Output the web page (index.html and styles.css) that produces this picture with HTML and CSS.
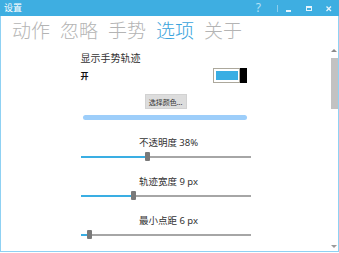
FILE: index.html
```html
<!DOCTYPE html>
<html>
<head>
  <title>设置</title>
  <meta charset="utf-8">
  <link rel="stylesheet" href="styles.css">
</head>
<body>
  <div class="window">
    <div class="titlebar">
      <span class="title">设置</span>
      <div class="controls">
        <span class="help">?</span>
        <span class="sep"></span>
        <svg class="ctl" width="6" height="12" viewBox="0 0 6 12"><rect x="0" y="10" width="5" height="2" fill="#e6f4fc"/></svg>
        <svg class="ctl" width="6" height="12" viewBox="0 0 6 12"><rect x="0.5" y="6.5" width="5" height="4" fill="none" stroke="#e6f4fc"/><rect x="0" y="6" width="6" height="2" fill="#e6f4fc"/></svg>
        <svg class="ctl" width="6" height="12" viewBox="0 0 6 12"><path d="M0.5 6.5 L5 11 M5 6.5 L0.5 11" stroke="#e6f4fc" stroke-width="1.3"/></svg>
      </div>
    </div>

    <div class="tabs">
      <span class="tab">动作</span>
      <span class="tab">忽略</span>
      <span class="tab">手势</span>
      <span class="tab active">选项</span>
      <span class="tab">关于</span>
    </div>

    <div class="panel">
      <div class="content">
        <div class="settings">
          <div class="label">显示手势轨迹</div>
          <div class="toggle-row">
            <span class="state">开</span>
            <div class="toggle">
              <div class="track"><div class="fill"></div></div>
              <div class="knob"></div>
            </div>
          </div>
          <div class="btn-row"><button class="btn">选择颜色...</button></div>
          <div class="color-bar"></div>

          <div class="slider-group">
            <div class="slider-label">不透明度 38%</div>
            <div class="slider">
              <div class="done" style="width: 64px"></div>
              <div class="thumb"></div>
              <div class="rest"></div>
            </div>
          </div>
          <div class="slider-group">
            <div class="slider-label">轨迹宽度 9 px</div>
            <div class="slider">
              <div class="done" style="width: 50px"></div>
              <div class="thumb"></div>
              <div class="rest"></div>
            </div>
          </div>
          <div class="slider-group">
            <div class="slider-label">最小点距 6 px</div>
            <div class="slider">
              <div class="done" style="width: 6px"></div>
              <div class="thumb"></div>
              <div class="rest"></div>
            </div>
          </div>
        </div>
      </div>
      <div class="scrollbar">
        <div class="arrow up"></div>
        <div class="sb-thumb"></div>
        <div class="sb-track"></div>
        <div class="arrow down"></div>
      </div>
    </div>
  </div>
</body>
</html>
```

FILE: styles.css
```css
body {
  margin: 0;
  background: #fff;
  font-family: "Noto Sans", "Noto Sans CJK SC", sans-serif;
  color: #333;
}

.window {
  width: 339px;
  height: 252px;
  box-sizing: border-box;
  border: 1px solid #8fd1f3;
  border-top: none;
}

.titlebar {
  height: 16px;
  margin: 0 -1px;
  background: #3eaee1;
  display: flex;
  align-items: center;
  color: #fff;
}

.title {
  font-size: 9px;
  line-height: 16px;
  padding-left: 4px;
}

.controls {
  margin-left: auto;
  display: flex;
  align-items: flex-start;
  height: 16px;
}

.help {
  font-size: 12px;
  line-height: 16px;
  color: #b5e1f6;
  margin-right: 16px;
}

.sep {
  width: 1px;
  height: 7px;
  margin-top: 5px;
  background: #8ccdec;
  margin-right: 8px;
}

.ctl {
  margin-right: 14px;
}

.ctl:last-child {
  margin-right: 7px;
}

.tabs {
  padding: 6px 0 0 11px;
  height: 24px;
  font-size: 19px;
  line-height: 19px;
  font-weight: 300;
  color: #b4b4b4;
}

.tab {
  margin-right: 5px;
}

.tab.active {
  color: #3ba4dc;
}

.panel {
  display: flex;
  height: 205px;
}

.content {
  flex: 1;
  overflow: hidden;
}

.settings {
  width: 170px;
  margin: 0 auto;
  padding-top: 6px;
}

.label {
  font-size: 10px;
  line-height: 12px;
}

.toggle-row {
  display: flex;
  align-items: center;
  justify-content: space-between;
  margin-top: 4px;
  padding-right: 4px;
}

.state {
  font-size: 8px;
  font-weight: bold;
  color: #111;
}

.toggle {
  display: flex;
  width: 34px;
  height: 15px;
}

.track {
  flex: 1;
  border: 1px solid #aca89c;
  padding: 2px 1px 2px 2px;
}

.fill {
  height: 100%;
  background: #3aaee3;
}

.knob {
  width: 7px;
  background: #000;
}

.btn-row {
  display: flex;
  justify-content: center;
  margin-top: 11px;
}

.btn {
  width: 42px;
  height: 15px;
  padding: 0;
  border: 1px solid #d2d2d2;
  background: #dddddd;
  font-family: inherit;
  font-size: 7px;
  color: #333;
}

.color-bar {
  height: 5px;
  margin: 6px 4px 0 2px;
  border-radius: 3px;
  background: #9dcefa;
}

.slider-group {
  margin-top: 17px;
}

.slider-group + .slider-group {
  margin-top: 15px;
}

.slider-label {
  font-size: 9.5px;
  line-height: 12px;
  text-align: center;
  padding-left: 6px;
}

.slider {
  display: flex;
  align-items: center;
  height: 9px;
  margin-top: 3px;
}

.done {
  height: 2px;
  background: #3aaee3;
}

.thumb {
  width: 5px;
  height: 9px;
  border-radius: 1px;
  background: #7a7a7a;
}

.rest {
  flex: 1;
  height: 2px;
  background: #a6a6a6;
}

.scrollbar {
  width: 8px;
  display: flex;
  flex-direction: column;
  align-items: center;
}

.arrow {
  width: 0;
  height: 0;
  border-left: 3px solid transparent;
  border-right: 3px solid transparent;
}

.arrow.up {
  margin: 3px 0 6px;
  border-bottom: 3px solid #8a8a8a;
}

.arrow.down {
  margin: 0 0 3px;
  border-top: 3px solid #9a9a9a;
}

.sb-thumb {
  width: 7px;
  height: 51px;
  background: #c2c2c2;
}

.sb-track {
  flex: 1;
}
```
